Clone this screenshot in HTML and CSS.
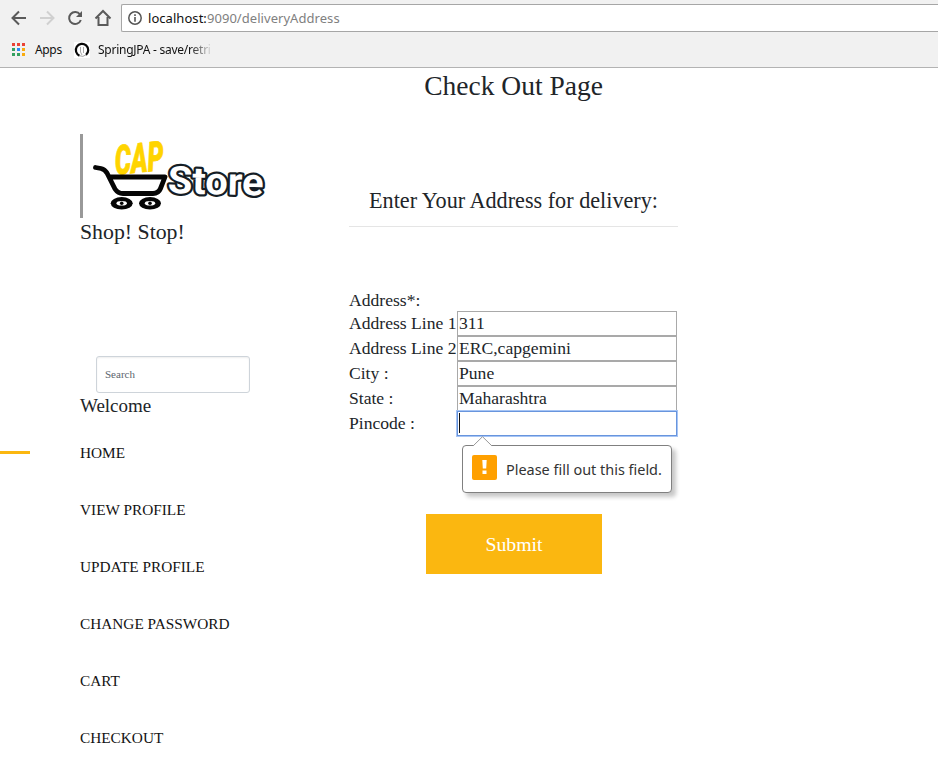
FILE: index.html
```html
<!DOCTYPE html>
<html lang="en">
<head>
<meta charset="utf-8">
<title>Check Out Page</title>
<link rel="stylesheet" href="styles.css">
</head>
<body>
<header class="browser">
  <div class="toolbar">
    <svg class="nav-icons" width="121" height="36" viewBox="0 0 121 36" fill="none" stroke="#5a5a5a" stroke-width="2">
      <path d="M26 18H13M19 11.5L12.5 18L19 24.5"/>
      <path d="M40 18H53M47 11.5L53.500 18L47 24.500" stroke="#d0d0d0"/>
      <path d="M80 14.500A6 6 0 1 0 80.800 20"/>
      <path d="M82 11V17H76Z" fill="#5a5a5a" stroke="none"/>
      <path d="M95.500 18.500L103 11L110.500 18.500M98.500 17V25H107.500V17"/>
    </svg>
    <div class="url-box">
      <svg class="info" width="16" height="16" viewBox="0 0 16 16"><circle cx="8" cy="8" r="6.200" fill="none" stroke="#555" stroke-width="1.500"/><path d="M7.200 7H8.800V11.700H7.200ZM7.200 4.300H8.800V5.900H7.200Z" fill="#555"/></svg>
      <span class="url">localhost:<span class="path">9090/deliveryAddress</span></span>
    </div>
  </div>
  <div class="bookmarks">
    <svg class="apps-icon" width="13" height="13" viewBox="0 0 13 13">
      <path fill="#ea4335" d="M0 0h3v3H0zM5 0h3v3H5zM10 0h3v3h-3z"/>
      <path fill="#34a060" d="M0 5h3v3H0zM0 10h3v3H0zM5 10h3v3H5z"/>
      <path fill="#2a8af6" d="M5 5h3v3H5z"/>
      <path fill="#f9ab10" d="M10 5h3v3h-3zM10 10h3v3h-3z"/>
    </svg>
    <span class="apps">Apps</span>
    <svg class="favicon" width="16" height="16" viewBox="0 0 16 16"><path fill="#fff" d="M0 0h16v16H0z"/><path d="M5.500 13.700A6.200 6.200 0 1 1 12 12.800" fill="none" stroke="#080808" stroke-width="2.200"/><path d="M5.500 13.700Q9 15.500 12 12.800" fill="none" stroke="#777" stroke-width=".7"/><path d="M6.500 5v5l1.500 3M9.500 5v6" fill="none" stroke="#aaa"/></svg>
    <span class="bookmark">SpringJPA - save/retri</span>
  </div>
</header>
<div class="page">
  <aside class="sidebar">
    <div class="logo">
      <svg width="190" height="84" viewBox="0 0 190 84">
        <g transform="translate(32.500 41) rotate(-6) skewX(-3)"><text class="cap" textLength="49" lengthAdjust="spacingAndGlyphs">CAP</text></g>
        <path d="M12.500 33.500L18 34.500Q22 35.500 24 39L32 55Q35 59.500 40 59.500H70Q75.500 59.500 77.500 54.500L82 43H27" fill="none" stroke="#050505" stroke-width="4.800" stroke-linecap="round" stroke-linejoin="round"/>
        <g fill="#050505"><ellipse cx="38.700" cy="69.300" rx="11" ry="6.200"/><ellipse cx="67" cy="69.300" rx="11" ry="6.200"/></g>
        <g fill="#fff"><ellipse cx="38.700" cy="69.300" rx="5.200" ry="2.300"/><ellipse cx="67" cy="69.300" rx="5.200" ry="2.300"/></g>
        <g fill="#050505"><circle cx="38.700" cy="69.300" r="1.800"/><circle cx="67" cy="69.300" r="1.800"/></g>
        <text class="store" x="84.500" y="59" textLength="96" lengthAdjust="spacingAndGlyphs" transform="rotate(1.500 85 58)">Store</text>
      </svg>
    </div>
    <div class="slogan">Shop! Stop!</div>
    <input class="search" type="text" placeholder="Search">
    <div class="welcome">Welcome</div>
    <nav class="menu">
      <a class="active">HOME</a>
      <a>VIEW PROFILE</a>
      <a>UPDATE PROFILE</a>
      <a>CHANGE PASSWORD</a>
      <a>CART</a>
      <a>CHECKOUT</a>
    </nav>
  </aside>
  <main class="content">
    <h1>Check Out Page</h1>
    <h2>Enter Your Address for delivery:</h2>
    <div class="form">
      <div class="form-title">Address*:</div>
      <div class="row"><label>Address Line 1</label><div class="field">311</div></div>
      <div class="row"><label>Address Line 2</label><div class="field">ERC,capgemini</div></div>
      <div class="row"><label>City :</label><div class="field">Pune</div></div>
      <div class="row"><label>State :</label><div class="field">Maharashtra</div></div>
      <div class="row"><label>Pincode :</label><div class="field focused"><span class="caret"></span>
        <div class="tip">
          <svg class="tip-arrow" width="20" height="10" viewBox="0 0 20 10"><path d="M0 10L9.500 .7L19 10" fill="#fff" stroke="#999"/></svg>
          <svg class="tip-icon" width="25" height="25" viewBox="0 0 25 25"><rect width="25" height="25" rx="2" fill="#ffa000"/><path d="M10.300 5h4.400l-.5 8.500h-3.400zM10.500 15.500h4V19h-4z" fill="#fff"/></svg>
          <span class="tip-text">Please fill out this field.</span>
        </div></div></div>
    </div>
    <button class="submit">Submit</button>
  </main>
</div>
</body>
</html>
```
FILE: styles.css
```css
* { box-sizing: border-box; }
body {
  margin: 0;
  height: 782px;
  overflow: hidden;
  background: #fff;
  color: #212529;
  font-family: "Liberation Serif", "Times New Roman", serif;
}
.browser {
  height: 68px;
  background: #f1f1f1;
  border-bottom: 1px solid #b3b3b3;
  font-family: "Noto Sans", sans-serif;
}
.toolbar { display: flex; height: 36px; }
.url-box {
  flex: 1;
  display: flex;
  align-items: center;
  height: 28px;
  margin-top: 4px;
  padding-left: 5px;
  background: #fff;
  border: 1px solid #a6a6a6;
  border-right: 0;
  border-radius: 2px 0 0 2px;
}
.url {
  margin-left: 5px;
  font-size: 13px;
  line-height: 20px;
  letter-spacing: .05px;
  color: #111;
}
.path { color: #808080; }
.bookmarks {
  display: flex;
  align-items: center;
  height: 28px;
  padding-left: 12px;
  font-size: 12px;
  color: #111;
}
.bookmarks span { position: relative; top: -1px; }
.apps-icon { margin-top: -1px; }
.apps { width: 28px; margin: 0 11px 0 10px; letter-spacing: -.35px; }
.bookmark {
  width: 115px;
  margin-left: 8px;
  overflow: hidden;
  white-space: nowrap;
  letter-spacing: -.25px;
  -webkit-mask-image: linear-gradient(to right, #000 80%, transparent);
  mask-image: linear-gradient(to right, #000 80%, transparent);
}
.page { display: flex; }
.sidebar { width: 349px; padding: 66px 0 0 80px; }
.logo { height: 84px; border-left: 3px solid #999; }
.logo svg { display: block; overflow: visible; }
.cap {
  font: italic 900 41px Roboto, sans-serif;
  fill: #ffd400;
  stroke: #ffd400;
  stroke-width: .8px;
}
.store {
  font: 700 38px Roboto, sans-serif;
  fill: #fff;
  stroke: #151d25;
  stroke-width: 4.500px;
  stroke-linejoin: round;
  paint-order: stroke;
}
.slogan { height: 138px; font-size: 21.800px; line-height: 28px; }
.search {
  display: block;
  width: 154px;
  height: 37px;
  margin-left: 16px;
  padding: 0 8px 2px;
  border: 1px solid #ced4da;
  border-radius: 3px;
  box-shadow: inset 0 1px 2px #eee;
  font: 11px "Liberation Serif", serif;
}
.search::placeholder { color: #5c656d; }
.welcome { height: 31px; font-size: 19px; line-height: 26px; }
.menu { display: flex; flex-direction: column; }
.menu a {
  position: relative;
  height: 57px;
  color: #131313;
  font-size: 15.300px;
  line-height: 57px;
}
.active::before {
  content: "";
  position: absolute;
  left: -80px;
  top: 27px;
  width: 30px;
  height: 3px;
  background: #fbb710;
}
.content { width: 329px; }
h1, h2 { margin: 0; font-weight: 400; text-align: center; }
h1 { height: 107px; font-size: 27.500px; line-height: 36px; }
h2 {
  height: 52px;
  border-bottom: 1px solid #e5e5e5;
  font-size: 22.200px;
  line-height: 51px;
}
.form { padding-top: 62px; font-size: 17.600px; }
.form-title { height: 22px; line-height: 23px; }
.row { display: flex; height: 25px; line-height: 25px; }
.row label { width: 108px; white-space: nowrap; }
.field {
  width: 220px;
  height: 25px;
  padding-left: 1px;
  border: 1px solid #a9a9a9;
  line-height: 23px;
}
.focused {
  position: relative;
  border-color: #6895dd;
  box-shadow: 0 0 0 1px #a7c5f5;
}
.caret { display: block; width: 1px; height: 20px; margin-top: 1px; background: #111; }
.tip {
  position: absolute;
  left: 4px;
  top: 33px;
  display: flex;
  align-items: center;
  width: 210px;
  height: 48px;
  padding: 0 9px 4px;
  background: #fff;
  border: 1px solid #808080;
  border-radius: 4px;
  box-shadow: 4px 4px 4px rgba(0, 0, 0, .22);
}
.tip-arrow { position: absolute; left: 10px; top: -10px; }
.tip-icon { flex: none; }
.tip-text {
  margin: 4px 0 0 9px;
  white-space: nowrap;
  font: 14.450px "Noto Sans", sans-serif;
  color: #333;
}
.submit {
  display: block;
  width: 176px;
  height: 60px;
  margin: 78px 0 0 77px;
  padding-top: 1px;
  background: #fbb710;
  border: 0;
  color: #fff;
  font: 19.800px "Liberation Serif", serif;
}
```
